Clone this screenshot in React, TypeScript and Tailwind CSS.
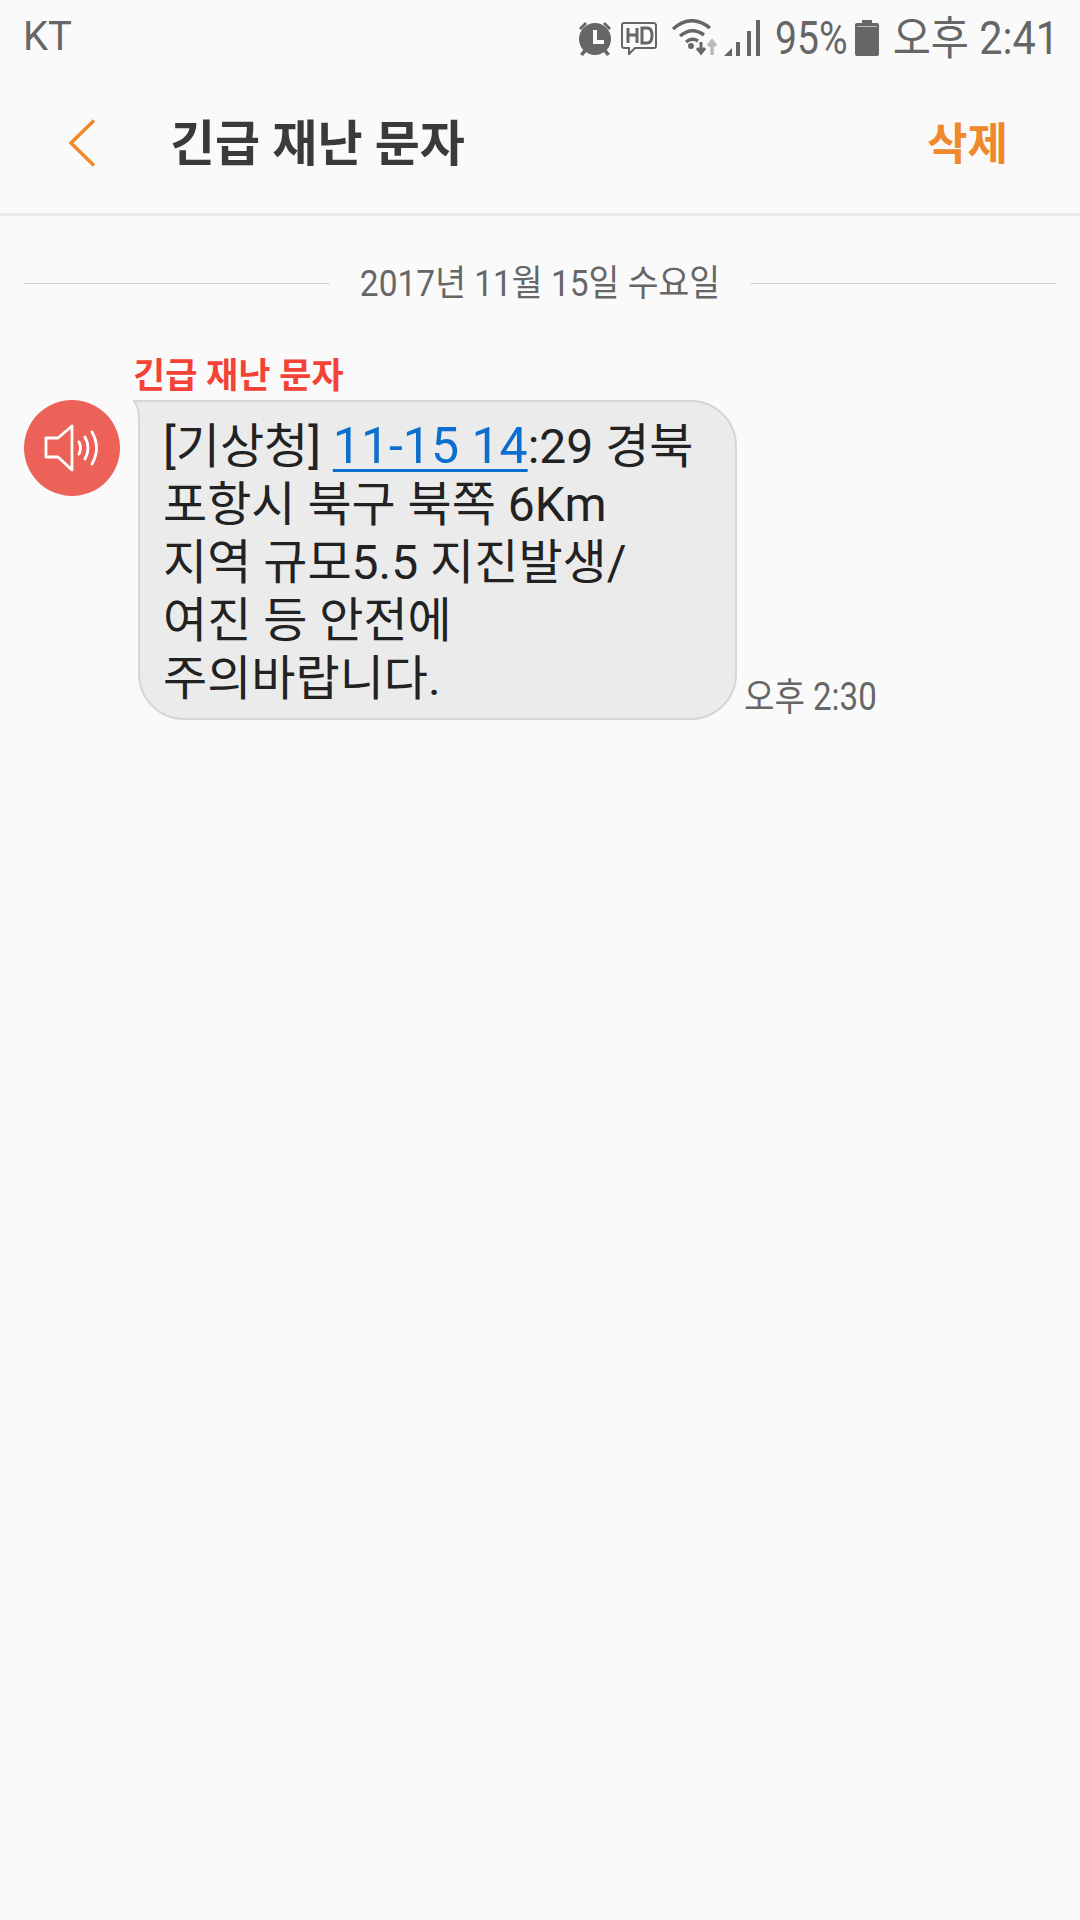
const font = "[font-family:Roboto,'Noto_Sans_CJK_KR',sans-serif]";

function StatusIcons() {
  return (
    <div className="flex items-center mt-[3px]">
      <svg width="36" height="38" viewBox="0 0 36 38" className="mr-[7px]" fill="#666">
        <circle cx="18" cy="20" r="16" />
        <path d="M16 11h4v10h7v4H16z" fill="#fbfbfb" />
        <path d="M2 9l6-6 2 2-6 6zM34 9l-6-6-2 2 6 6zM3 35l4-5 3 2-4 5zM33 35l-4-5-3 2 4 5z" />
      </svg>
      <svg width="38" height="34" viewBox="0 0 38 34" className="mr-[13px]" fill="none">
        <path d="M4 2h30a2.500 2.500 0 0 1 2 2v21a2 2 0 0 1-2 2H15l-6 6v-6H4a2 2 0 0 1-2-2V4a2 2 0 0 1 2-2z" stroke="#666" strokeWidth="2" />
        <path d="M8 7v15M8 14h9M17 7v15" stroke="#666" strokeWidth="3" />
        <path d="M22 7v15h5q5 0 5-7.500t-5-7.500z" stroke="#666" strokeWidth="3" />
      </svg>
      <svg width="48" height="38" viewBox="0 0 48 38" fill="none" className="mr-[5px]">
        <path d="M2 10Q20-6 39 9M9 17Q21 7 33 16M15 23Q21 18 27 22" stroke="#666" strokeWidth="3.500" />
        <circle cx="20" cy="27" r="3" fill="#666" />
        <path d="M30 23v10M26 29l4 5 4-5" stroke="#666" strokeWidth="3" />
        <path d="M41 36V24M37 27l4-5 4 5" stroke="#bbb" strokeWidth="3.500" />
      </svg>
      <svg width="36" height="36" viewBox="0 0 36 36" fill="#666" className="mr-[15px]">
        <path d="M0 36l8-8v8zM12 22h4v14h-4zM23 11h4v25h-4zM32 0h4v36h-4z" />
      </svg>
      <span className={`${font} text-[46px] leading-none text-[#666] scale-x-[0.85] origin-left w-[71px] whitespace-nowrap`}>95%</span>
      <svg width="24" height="36" viewBox="0 0 24 36" fill="#666" className="ml-[9px] mr-[18px]">
        <path d="M7 0h10v3h5a2 2 0 0 1 2 2v29a2 2 0 0 1-2 2H2a2 2 0 0 1-2-2V5a2 2 0 0 1 2-2h5z" />
        <path d="M2 6h20v1H2z" fill="#bbb" />
      </svg>
      <span className={`${font} text-[46px] leading-none text-[#666] scale-x-[0.9] origin-right w-[162px] whitespace-nowrap flex justify-end`}>오후 2:41</span>
    </div>
  );
}

export default function App() {
  return (
    <div className={`${font} w-[1080px] h-[1920px] bg-[#fafafa] flex flex-col overflow-hidden`}>
      <div className="h-[72px] flex items-center justify-between pl-[23px] pr-[21px]">
        <span className="text-[40px] leading-none text-[#666] mt-[2px]">KT</span>
        <StatusIcons />
      </div>
      <div className="h-[144px] flex items-center border-b-[3px] border-[#ebebeb] pl-[68px] pr-[72px]">
        <svg width="28" height="48" viewBox="0 0 28 48" fill="none">
          <path d="M26 1.500L3 24l23 22.500" stroke="#f0882c" strokeWidth="3.500" />
        </svg>
        <span className="ml-[74px] text-[49px] font-bold text-[#3a3a3a] leading-none whitespace-nowrap mt-[3px]">긴급 재난 문자</span>
        <span className="ml-auto text-[44px] font-bold text-[#f0882c] leading-none mt-[5px]">삭제</span>
      </div>
      <div className="flex items-center mt-[44px] pl-[24px] pr-[24px]">
        <div className="w-[306px] h-px bg-[#d4d4d4]" />
        <span className="w-[420px] text-center text-[36px] leading-[46px] text-[#666] whitespace-nowrap scale-x-[0.93] translate-y-[1px]">2017년 11월 15일 수요일</span>
        <div className="flex-1 h-px bg-[#d4d4d4]" />
      </div>
      <div className="ml-[133px] mt-[50px] text-[35px] font-bold leading-[42px] text-[#f44336] whitespace-nowrap">긴급 재난 문자</div>
      <div className="flex items-start mt-[2px] pl-[24px]">
        <div className="w-[96px] h-[96px] rounded-full bg-[#ec6259] flex items-center justify-center">
          <svg width="56" height="48" viewBox="0 0 56 48" fill="none" stroke="#fff" strokeWidth="2.800" strokeLinejoin="round" strokeLinecap="round">
            <path d="M2 14h12L28 2v44L14 33H2z" />
            <path d="M35 18q3 6 0 12M41 13q6 11 0 22M48 8q9 16 0 32" />
          </svg>
        </div>
        <div className="relative ml-[18px] w-[599px] h-[320px] rounded-[46px] rounded-tl-none border-2 border-[#d6d6d6] bg-[#ebebeb] pl-[23px] pt-[15px] text-[48px] leading-[58px] text-[#222] whitespace-nowrap">
          <svg width="9" height="20" viewBox="0 0 9 20" className="absolute left-[-7px] top-[-2px]">
            <path d="M0 1H9V20H6Q6 6 0 1z" fill="#ebebeb" />
            <path d="M0 1H9M0 1Q6 5 6 20" fill="none" stroke="#d6d6d6" strokeWidth="2" />
          </svg>
          <div>[기상청] <span className="text-[50px] text-[#0b6fd0] underline underline-offset-[6px] decoration-[3px]">11-15 14</span>:29 경북</div>
          <div>포항시 북구 북쪽 6Km</div>
          <div>지역 규모5.5 지진발생/</div>
          <div>여진 등 안전에</div>
          <div>주의바랍니다.</div>
        </div>
        <span className="self-end ml-[7px] mb-[1px] text-[38px] leading-[44px] text-[#666] whitespace-nowrap scale-x-[0.87] origin-left">오후 2:30</span>
      </div>
    </div>
  );
}
